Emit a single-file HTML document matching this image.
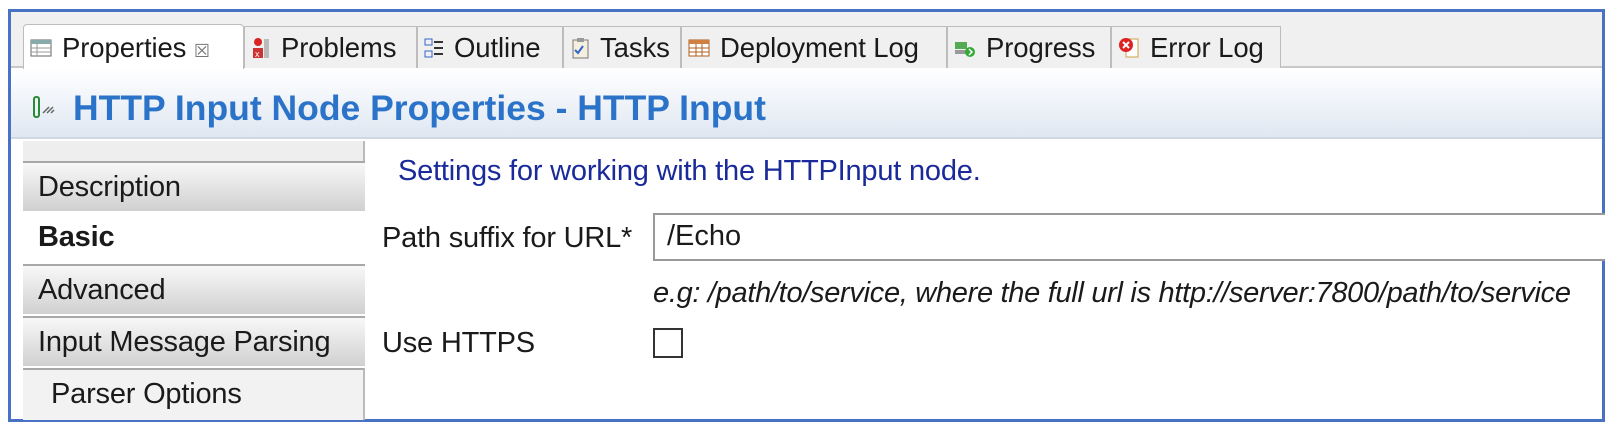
<!DOCTYPE html>
<html><head><meta charset="utf-8"><style>
*{margin:0;padding:0;box-sizing:border-box}
body{width:1620px;height:434px;background:#fff;position:relative;overflow:hidden;font-family:"Liberation Sans",sans-serif;color:#1a1a1a}
.a{position:absolute;white-space:nowrap}
.frame{left:8px;top:9px;width:1597px;height:413px;border:3px solid #4a72c4;background:#fff}
.tabbar{left:11px;top:12px;width:1591px;height:56px;background:#f0f0f0;border-bottom:2px solid #c8c8c8}
.tab{top:26px;height:42px;border:1px solid #bdbdbd;border-bottom:none;background:#f0f0f0;font-size:27.5px;line-height:42px;padding-left:6px;letter-spacing:-0.1px}
.tab.sel{background:#fff;top:24px;height:46px;border-radius:4px 4px 0 0;line-height:46px}
.hdr{left:11px;top:69px;width:1591px;height:70px;background:linear-gradient(#fff,#dfe7f2);border-bottom:2px solid #cfd7e2}
.title{left:73px;top:88px;font-size:35.5px;font-weight:bold;color:#2b73c9;letter-spacing:0}
.side{left:23px;width:342px;height:50px;font-size:29px;line-height:48px;padding-left:15px;border-top:2px solid #a8a8a8;background:linear-gradient(#f8f8f8,#d0d0d0);letter-spacing:-0.2px}
.lbl{font-size:29px;letter-spacing:-0.2px}
.ic{display:inline-block;vertical-align:middle;margin-right:10px;margin-top:-4px}
</style></head><body>
<div class="a frame"></div>
<div class="a tabbar"></div>
<div class="a tab sel" style="left:23px;width:221px"><svg class="ic" width="22" height="20"><rect x="1" y="2" width="20" height="16" fill="#fff" stroke="#666"/><rect x="1" y="2" width="20" height="4" fill="#8aa"/><line x1="1" y1="10" x2="21" y2="10" stroke="#999"/><line x1="1" y1="14" x2="21" y2="14" stroke="#999"/><line x1="7" y1="6" x2="7" y2="18" stroke="#999"/></svg>Properties <span style="font-size:18px;color:#777">&#x2612;</span></div>
<div class="a tab" style="left:244px;width:173px"><svg class="ic" width="20" height="24"><circle cx="7" cy="6" r="4" fill="#d22"/><rect x="2" y="12" width="10" height="10" fill="#c33"/><text x="4" y="21" font-size="9" fill="#fff" font-family="Liberation Sans">x</text><rect x="13" y="3" width="5" height="19" fill="#bbb"/></svg>Problems</div>
<div class="a tab" style="left:417px;width:146px"><svg class="ic" width="20" height="22"><rect x="1" y="2" width="7" height="6" fill="none" stroke="#36c"/><rect x="1" y="14" width="7" height="6" fill="none" stroke="#36c"/><line x1="10" y1="5" x2="19" y2="5" stroke="#333" stroke-width="2"/><line x1="10" y1="11" x2="19" y2="11" stroke="#333" stroke-width="2"/><line x1="10" y1="17" x2="19" y2="17" stroke="#333" stroke-width="2"/></svg>Outline</div>
<div class="a tab" style="left:563px;width:118px"><svg class="ic" width="20" height="24"><rect x="3" y="4" width="15" height="18" fill="#f4efdf" stroke="#777"/><rect x="7" y="2" width="7" height="4" fill="#999"/><path d="M5 14l3 3 5-7" stroke="#36c" stroke-width="2" fill="none"/></svg>Tasks</div>
<div class="a tab" style="left:681px;width:266px"><svg class="ic" width="22" height="20"><rect x="1" y="2" width="20" height="16" fill="#fff" stroke="#b06020"/><rect x="1" y="2" width="20" height="4" fill="#d08040"/><line x1="1" y1="10" x2="21" y2="10" stroke="#b06020"/><line x1="1" y1="14" x2="21" y2="14" stroke="#b06020"/><line x1="8" y1="6" x2="8" y2="18" stroke="#b06020"/><line x1="14" y1="6" x2="14" y2="18" stroke="#b06020"/></svg>Deployment Log</div>
<div class="a tab" style="left:947px;width:164px"><svg class="ic" width="22" height="20"><rect x="1" y="4" width="12" height="7" fill="#5a5"/><rect x="1" y="12" width="12" height="4" fill="#999"/><circle cx="16" cy="14" r="5" fill="#3a3"/><path d="M15 11l3 3-3 3" stroke="#fff" fill="none" stroke-width="1.5"/></svg>Progress</div>
<div class="a tab" style="left:1111px;width:170px"><svg class="ic" width="22" height="24"><rect x="8" y="3" width="12" height="18" fill="#fff" stroke="#c9a040"/><circle cx="8" cy="9" r="7" fill="#d22"/><path d="M5 6l6 6M11 6l-6 6" stroke="#fff" stroke-width="2"/></svg>Error Log</div>
<div class="a hdr"></div>
<svg class="a" style="left:33px;top:95px" width="32" height="26"><rect x="1" y="2" width="5" height="20" rx="2" fill="none" stroke="#2a8a3a" stroke-width="2"/><path d="M10 18l6-6M14 18l6-6M18 18l3-3" stroke="#666" stroke-width="1.5"/></svg>
<div class="a title">HTTP Input Node Properties - HTTP Input</div>
<div class="a" style="left:23px;top:141px;width:342px;height:20px;background:#eee;border-right:2px solid #bbb"></div>
<div class="a side" style="top:161px">Description</div>
<div class="a" style="left:23px;top:211px;width:342px;height:53px;font-size:29px;font-weight:bold;line-height:52px;padding-left:15px;letter-spacing:-0.2px">Basic</div>
<div class="a side" style="top:264px">Advanced</div>
<div class="a side" style="top:316px">Input Message Parsing</div>
<div class="a" style="left:23px;top:368px;width:342px;height:52px;font-size:29px;line-height:48px;padding-left:28px;border-top:2px solid #a8a8a8;background:#f2f2f2;border-right:2px solid #bbb;letter-spacing:-0.2px">Parser Options</div>
<div class="a lbl" style="left:398px;top:155px;color:#1a2a9a">Settings for working with the HTTPInput node.</div>
<div class="a lbl" style="left:382px;top:222px">Path suffix for URL*</div>
<div class="a" style="left:653px;top:213px;width:952px;height:48px;border:2px solid #999;border-right:none;background:#fff;font-size:29px;line-height:42px;padding-left:12px">/Echo</div>
<div class="a" style="left:653px;top:277px;font-size:29px;font-style:italic;letter-spacing:-0.3px">e.g: /path/to/service, where the full url is http://server:7800/path/to/service</div>
<div class="a lbl" style="left:382px;top:327px">Use HTTPS</div>
<div class="a" style="left:653px;top:328px;width:30px;height:30px;border:2px solid #333;background:#fff"></div>
</body></html>
